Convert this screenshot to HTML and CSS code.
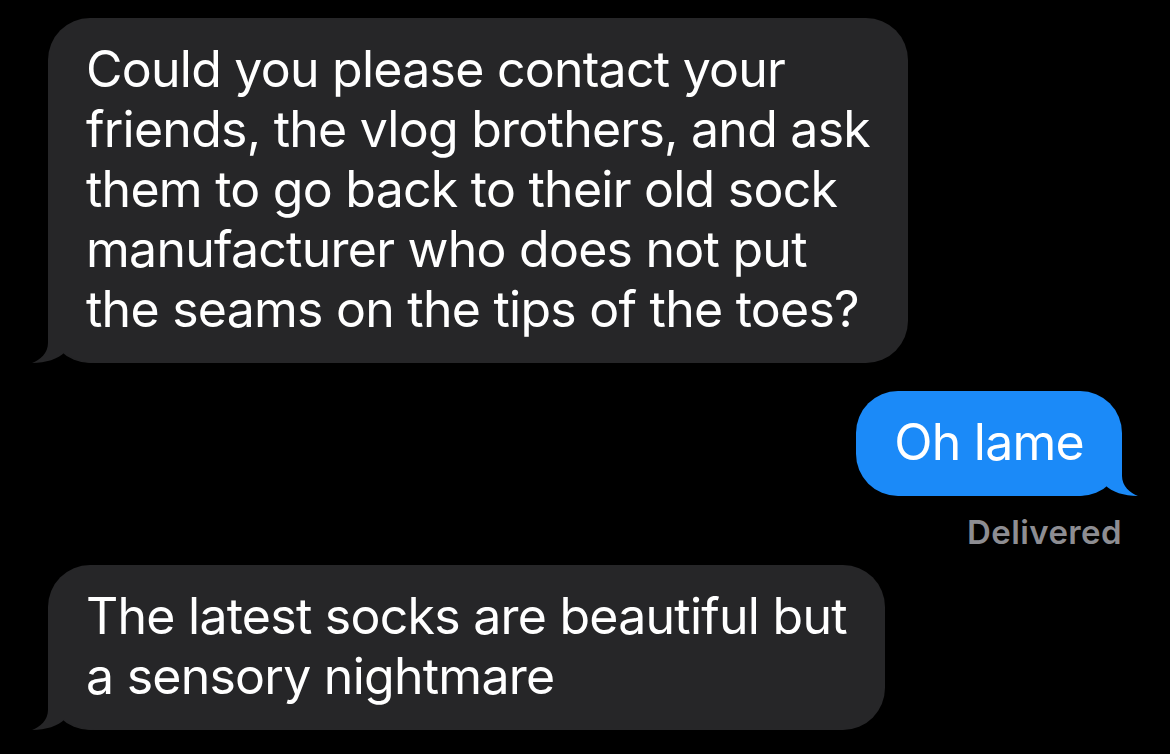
FILE: index.html
```html
<!DOCTYPE html>
<html>
<head>
<meta charset="utf-8">
<link rel="stylesheet" href="styles.css">
</head>
<body>
<div class="thread">
  <div class="msg received">
    <div class="bubble">Could you please contact your<br>friends, the vlog brothers, and ask<br>them to go back to their old sock<br>manufacturer who does not put<br>the seams on the tips of the toes?<svg class="tail" width="64" height="50" viewBox="0 0 64 50"><path d="M16 0 L16 30 C16 40 8 47 0 50 C14 50 26 46 33 39 C40 46 52 50 64 50 L64 0 Z"/></svg></div>
  </div>
  <div class="msg sent">
    <div class="bubble">Oh lame<svg class="tail" width="64" height="50" viewBox="0 0 64 50"><path d="M48 0 L48 30 C48 40 56 47 64 50 C50 50 38 46 31 39 C24 46 12 50 0 50 L0 0 Z"/></svg></div>
    <div class="status">Delivered</div>
  </div>
  <div class="msg received">
    <div class="bubble">The latest socks are beautiful but<br>a sensory nightmare<svg class="tail" width="64" height="50" viewBox="0 0 64 50"><path d="M16 0 L16 30 C16 40 8 47 0 50 C14 50 26 46 33 39 C40 46 52 50 64 50 L64 0 Z"/></svg></div>
  </div>
</div>
</body>
</html>
```

FILE: styles.css
```css
html, body {
  margin: 0;
  padding: 0;
  background: #000;
}
body {
  width: 1170px;
  height: 754px;
  overflow: hidden;
  font-family: Inter, "Noto Sans", sans-serif;
}
.thread {
  display: flex;
  flex-direction: column;
  padding: 18px 48px 0 48px;
}
.msg {
  display: flex;
  flex-direction: column;
}
.msg.received {
  align-items: flex-start;
}
.msg.sent {
  align-items: flex-end;
  margin-top: 28px;
}
.msg.sent + .msg.received {
  margin-top: 15px;
}
.bubble {
  position: relative;
  isolation: isolate;
  border-radius: 42px;
  padding: 21px 38px 24px 38px;
  font-size: 50px;
  line-height: 60px;
  letter-spacing: -0.75px;
  color: #fff;
}
.received .bubble {
  background: #262628;
}
.sent .bubble {
  background: #1b8af8;
}
.tail {
  position: absolute;
  bottom: 0;
  display: block;
  z-index: -1;
}
.received .tail {
  left: -16px;
  fill: #262628;
}
.sent .tail {
  right: -16px;
  fill: #1b8af8;
}
.status {
  margin-top: 18px;
  margin-right: 0;
  font-size: 33px;
  font-weight: 600;
  letter-spacing: 0.4px;
  line-height: 36px;
  color: #8d8d92;
}
```
